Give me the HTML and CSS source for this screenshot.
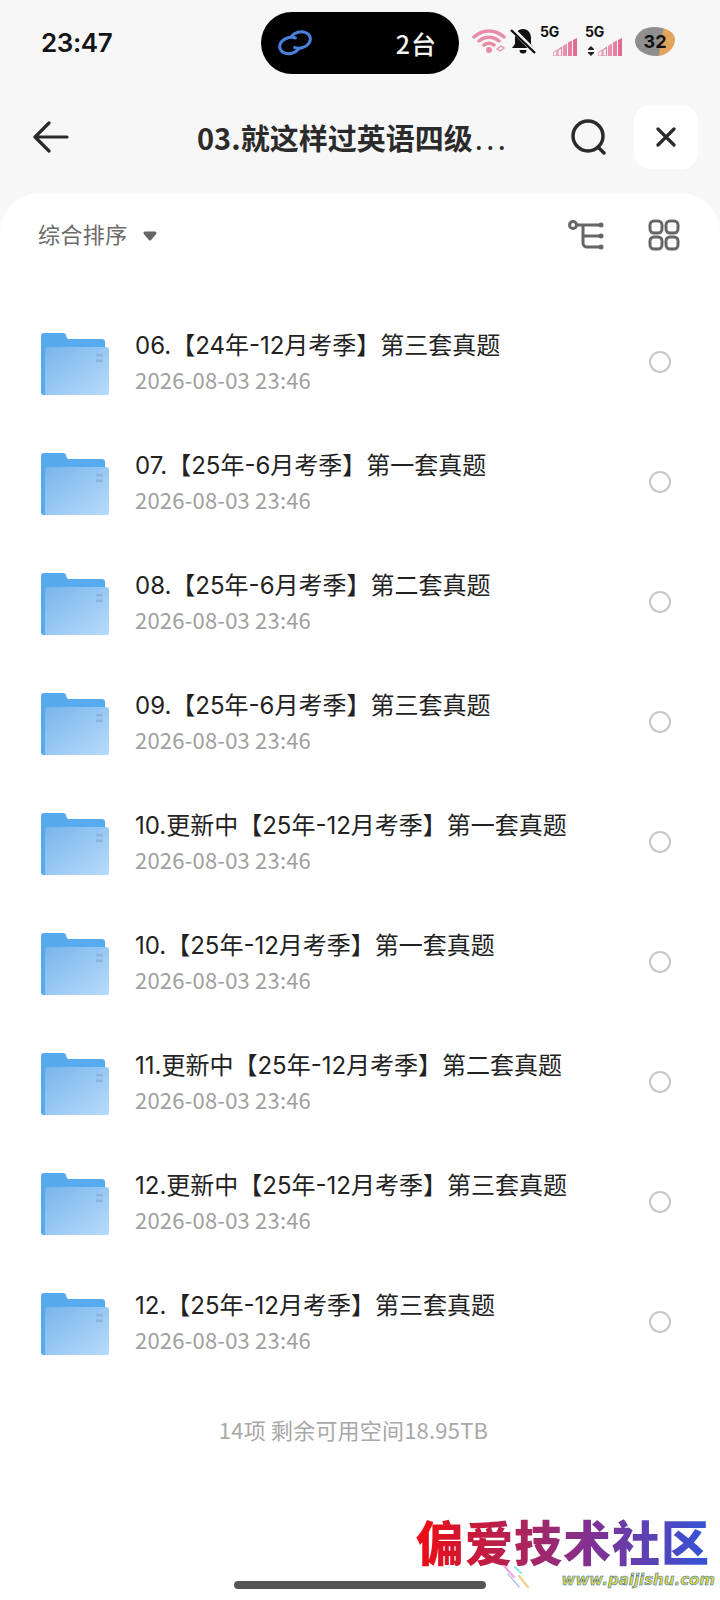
FILE: index.html
```html
<!DOCTYPE html>
<html lang="zh">
<head>
<meta charset="utf-8">
<title>03.就这样过英语四级</title>
<link rel="stylesheet" href="styles.css">
</head>
<body>
<svg class="defs" width="0" height="0" aria-hidden="true">
  <defs>
    <linearGradient id="fg" x1="0" y1="0" x2="1" y2="1">
      <stop offset="0" stop-color="#78b5ec"/>
      <stop offset="1" stop-color="#b8dbfb"/>
    </linearGradient>
    <symbol id="folder" viewBox="0 0 68 62">
      <path d="M0 59V3a3 3 0 0 1 3-3h19c2 0 3 1 3 2l1 3c.5 1 1 1 2 1h33a3 3 0 0 1 3 3v50a3 3 0 0 1-3 3H3a3 3 0 0 1-3-3z" fill="#58aaef"/>
      <path d="M4 17a3 3 0 0 1 3-3h58a3 3 0 0 1 3 3v43a2 2 0 0 1-2 2H5a1 1 0 0 1-1-1z" fill="url(#fg)"/>
      <path d="M55 21h7v2.500h-7zM55 26.500h7V29h-7z" fill="#8fb6da"/>
    </symbol>
    <symbol id="signal" viewBox="0 0 24 18">
      <path d="M0 18v-3l4-3v6z" fill="none" stroke="#e58aa6" stroke-width="1"/>
      <path d="M5 18v-6l3.500-2.500V18z" fill="none" stroke="#e58aa6" stroke-width="1.200"/>
      <path d="M10 18V8l4-2.500V18z" fill="#e88fab"/>
      <path d="M15 18V4.500l4-2V18z" fill="#e67f9f"/>
      <path d="M20 18V2l4-2v18z" fill="#df6c92"/>
    </symbol>
  </defs>
</svg>

<div class="page">
  <div class="status">
    <span class="time">23:47</span>
    <div class="island">
      <svg class="link" viewBox="0 0 36 28" width="36" height="28" fill="none" stroke="#4b7fdc" stroke-width="3" stroke-linecap="round">
        <ellipse cx="13" cy="16.500" rx="10.500" ry="8" transform="rotate(-15 13 16.500)" pathLength="100" stroke-dasharray="76 24" stroke-dashoffset="-12"/>
        <ellipse cx="23" cy="11" rx="10.500" ry="8" transform="rotate(-15 23 11)" pathLength="100" stroke-dasharray="76 24" stroke-dashoffset="-62"/>
      </svg>
      <span class="island-text">2台</span>
    </div>
    <div class="indicators">
      <svg class="wifi" viewBox="0 0 34 26" width="34" height="26" fill="none" stroke="#e88ca8" stroke-width="3.400" stroke-linecap="round">
        <path d="M2 9c9-8 21-8 30 0M7 13c6-5 14-5 20 0M12 17c3-2 7-2 10 0"/>
        <circle cx="17" cy="22" r="3" fill="#e88ca8" stroke="none"/>
        <path d="M25 21l4-3 3 2-4 3z" stroke-width="1.200"/>
      </svg>
      <svg class="bell" viewBox="0 0 26 26" width="26" height="26">
        <path d="M13 1c5 0 8 4 8 9v6l3 4H2l3-4v-6c0-5 3-9 8-9zM9.500 22h7a3.500 3.500 0 0 1-7 0z" fill="#111"/>
        <path d="M1 0l24 24" stroke="#f7f7f8" stroke-width="5"/>
        <path d="M1 2l24 23" stroke="#111" stroke-width="2.400"/>
      </svg>
      <div class="net">
        <span class="g5">5G</span>
        <svg class="sig" width="24" height="18"><use href="#signal"/></svg>
      </div>
      <div class="net net2">
        <span class="g5">5G</span>
        <span class="updown"></span>
        <svg class="sig" width="24" height="18"><use href="#signal"/></svg>
      </div>
      <div class="battery"><span class="batt-num">32</span></div>
    </div>
  </div>

  <header class="nav">
    <svg class="back" viewBox="0 0 36 32" width="36" height="32" fill="none" stroke="#2b2b2b" stroke-width="3.200" stroke-linecap="round" stroke-linejoin="round">
      <path d="M2 16h32M16 2 2 16l14 14"/>
    </svg>
    <h1 class="nav-title">03.就这样过英语四级<span class="dots">...</span></h1>
    <svg class="search" viewBox="0 0 36 36" width="36" height="36" fill="none" stroke="#2b2b2b" stroke-width="3.500" stroke-linecap="round">
      <circle cx="18" cy="17" r="15"/>
      <path d="M28 28l6 6"/>
    </svg>
    <div class="close">
      <svg viewBox="0 0 20 20" width="20" height="20" fill="none" stroke="#2b2b2b" stroke-width="3.200" stroke-linecap="round">
        <path d="M2 2l16 16M18 2 2 18"/>
      </svg>
    </div>
  </header>

  <main class="card">
    <div class="toolbar">
      <span class="sort">综合排序</span>
      <svg class="caret" viewBox="0 0 14 10" width="14" height="10">
        <path d="M2 2h10L7 8z" fill="#666" stroke="#666" stroke-width="3" stroke-linejoin="round"/>
      </svg>
      <svg class="tree" viewBox="0 0 38 32" width="38" height="32" fill="none" stroke="#666" stroke-width="3">
        <circle cx="5" cy="6" r="3.500"/>
        <path d="M9 6h25M15 6v18a4 4 0 0 0 4 4h15M15 17h19"/>
        <circle cx="33" cy="6" r="2.500" fill="#666" stroke="none"/>
        <circle cx="33" cy="17" r="2.500" fill="#666" stroke="none"/>
        <circle cx="33" cy="28" r="2.500" fill="#666" stroke="none"/>
      </svg>
      <svg class="grid-ico" viewBox="0 0 32 32" width="32" height="32" fill="none" stroke="#666" stroke-width="3">
        <rect x="2" y="2" width="12" height="12" rx="4"/>
        <rect x="18" y="2" width="12" height="12" rx="4"/>
        <rect x="2" y="18" width="12" height="12" rx="4"/>
        <rect x="18" y="18" width="12" height="12" rx="4"/>
      </svg>
    </div>

    <ul class="list">
      <li class="row">
        <svg class="folder" width="68" height="62"><use href="#folder"/></svg>
        <div class="info"><div class="name">06.【24年-12月考季】第三套真题</div><div class="date">2026-08-03 23:46</div></div>
        <span class="radio"></span>
      </li>
      <li class="row">
        <svg class="folder" width="68" height="62"><use href="#folder"/></svg>
        <div class="info"><div class="name">07.【25年-6月考季】第一套真题</div><div class="date">2026-08-03 23:46</div></div>
        <span class="radio"></span>
      </li>
      <li class="row">
        <svg class="folder" width="68" height="62"><use href="#folder"/></svg>
        <div class="info"><div class="name">08.【25年-6月考季】第二套真题</div><div class="date">2026-08-03 23:46</div></div>
        <span class="radio"></span>
      </li>
      <li class="row">
        <svg class="folder" width="68" height="62"><use href="#folder"/></svg>
        <div class="info"><div class="name">09.【25年-6月考季】第三套真题</div><div class="date">2026-08-03 23:46</div></div>
        <span class="radio"></span>
      </li>
      <li class="row">
        <svg class="folder" width="68" height="62"><use href="#folder"/></svg>
        <div class="info"><div class="name">10.更新中【25年-12月考季】第一套真题</div><div class="date">2026-08-03 23:46</div></div>
        <span class="radio"></span>
      </li>
      <li class="row">
        <svg class="folder" width="68" height="62"><use href="#folder"/></svg>
        <div class="info"><div class="name">10.【25年-12月考季】第一套真题</div><div class="date">2026-08-03 23:46</div></div>
        <span class="radio"></span>
      </li>
      <li class="row">
        <svg class="folder" width="68" height="62"><use href="#folder"/></svg>
        <div class="info"><div class="name">11.更新中【25年-12月考季】第二套真题</div><div class="date">2026-08-03 23:46</div></div>
        <span class="radio"></span>
      </li>
      <li class="row">
        <svg class="folder" width="68" height="62"><use href="#folder"/></svg>
        <div class="info"><div class="name">12.更新中【25年-12月考季】第三套真题</div><div class="date">2026-08-03 23:46</div></div>
        <span class="radio"></span>
      </li>
      <li class="row">
        <svg class="folder" width="68" height="62"><use href="#folder"/></svg>
        <div class="info"><div class="name">12.【25年-12月考季】第三套真题</div><div class="date">2026-08-03 23:46</div></div>
        <span class="radio"></span>
      </li>
    </ul>

    <p class="summary">14项 剩余可用空间18.95TB</p>
  </main>

  <div class="home-bar"></div>
  <div class="watermark">
    <div class="wm-title">偏爱技术社区</div>
    <div class="wm-url">www.paijishu.com</div>
    <svg class="wm-spark" viewBox="0 0 26 24" width="26" height="24" fill="none" stroke-width="2.200" stroke-linecap="round">
      <path d="M1 1l10 11" stroke="#f2a6e6"/>
      <path d="M12 2l6 6" stroke="#8fe8f0"/>
      <path d="M5 9l11 13" stroke="#a9c4e6" stroke-width="1.400"/>
      <path d="M16 11l9 11" stroke="#f6cf8a"/>
    </svg>
  </div>
</div>
</body>
</html>
```

FILE: styles.css
```css
* { box-sizing: border-box; }
html, body { margin: 0; padding: 0; }
body {
  width: 720px;
  height: 1600px;
  overflow: hidden;
  background: #f7f7f8;
  font-family: "Noto Sans CJK SC", "Noto Sans", sans-serif;
}
.defs { position: absolute; }
.page { position: relative; width: 720px; height: 1600px; display: flex; flex-direction: column; }

/* status bar */
.status {
  height: 74px;
  padding: 12px 0 0 41px;
  display: flex;
  align-items: center;
}
.time {
  width: 220px;
  font-family: Inter, "Noto Sans", sans-serif;
  font-size: 26px;
  font-weight: 600;
  color: #141414;
  letter-spacing: -0.4px;
  margin-top: -2px;
}
.island {
  width: 198px;
  height: 62px;
  border-radius: 31px;
  background: #000;
  display: flex;
  align-items: center;
  justify-content: space-between;
  padding: 0 22px 0 16px;
}
.island-text { color: #f4f4f4; font-size: 25px; font-weight: 500; letter-spacing: 1px; }
.indicators {
  display: flex;
  align-items: center;
  margin-top: -4px;
  margin-left: 13px;
}
.wifi { margin-right: 4px; }
.bell { margin-right: 4px; }
.net { position: relative; width: 36px; height: 30px; margin-right: 9px; }
.net2 { margin-right: 14px; }
.g5 {
  position: absolute;
  left: 0;
  top: -3px;
  font-family: Inter, sans-serif;
  font-size: 14px;
  font-weight: 700;
  color: #111;
  line-height: 17px;
  letter-spacing: -0.3px;
}
.sig { position: absolute; right: -1px; bottom: 0; }
.updown {
  position: absolute;
  left: 3px;
  bottom: 0;
  width: 6px;
  height: 10px;
  background: linear-gradient(#222 42%, transparent 42%, transparent 58%, #222 58%);
  clip-path: polygon(50% 0, 100% 30%, 100% 70%, 50% 100%, 0 70%, 0 30%);
}
.battery {
  width: 40px;
  height: 29px;
  border-radius: 48% 52% 46% 54% / 50% 42% 58% 50%;
  background: linear-gradient(100deg, #8f8f8f 0 62%, #e2a45c 66% 100%);
  display: flex;
  align-items: center;
  justify-content: center;
}
.batt-num { font-family: Inter, sans-serif; font-size: 18px; font-weight: 700; color: #111; }

/* nav */
.nav {
  height: 119px;
  display: flex;
  align-items: center;
  padding: 6px 22px 0 33px;
}
.back { flex: none; margin-right: 128px; }
.nav-title {
  flex: 1;
  margin: 0;
  font-size: 29px;
  font-weight: 700;
  color: #2b2b2b;
  white-space: nowrap;
}
.dots { font-weight: 400; letter-spacing: 3.500px; margin-left: 2px; }
.search { flex: none; margin-right: 28px; }
.close {
  flex: none;
  width: 64px;
  height: 64px;
  border-radius: 16px;
  background: #fff;
  display: flex;
  align-items: center;
  justify-content: center;
}

/* card */
.card {
  flex: 1;
  background: #fff;
  border-radius: 40px 40px 0 0;
}
.toolbar {
  height: 84px;
  display: flex;
  align-items: center;
  padding: 0 40px 0 38px;
}
.sort { font-size: 22px; color: #6a6a6a; letter-spacing: 0.4px; margin-top: -4px; }
.caret { margin-left: 15px; margin-top: 1px; }
.tree { margin-left: auto; margin-right: 42px; }
.list { list-style: none; margin: 25px 0 0; padding: 0; }
.row {
  height: 120px;
  display: flex;
  align-items: center;
  padding: 0 49px 0 41px;
}
.folder { flex: none; margin-right: 26px; margin-top: 4px; }
.info { flex: 1; min-width: 0; }
.name {
  font-family: Inter, "Noto Sans CJK SC", sans-serif;
  font-size: 24px;
  line-height: 32px;
  color: #222;
  white-space: nowrap;
}
.date { font-size: 22px; line-height: 30px; color: #a0a0a0; margin-top: 2px; white-space: nowrap; letter-spacing: 0.2px; }
.radio {
  flex: none;
  width: 22px;
  height: 22px;
  border: 2px solid #c8c8c8;
  border-radius: 50%;
}
.summary {
  margin: 32px 0 0;
  padding-right: 13px;
  text-align: center;
  font-size: 22px;
  line-height: 30px;
  color: #a8a8a8;
  letter-spacing: 0.2px;
}

/* overlays */
.home-bar {
  position: absolute;
  left: 234px;
  bottom: 11px;
  width: 252px;
  height: 8px;
  border-radius: 4px;
  background: #555;
}
.watermark {
  position: absolute;
  left: 416px;
  top: 1519px;
  width: 300px;
}
.wm-title {
  font-family: "Liberation Sans", "Noto Sans CJK SC", sans-serif;
  font-size: 48px;
  font-weight: 900;
  line-height: 52px;
  letter-spacing: 1px;
  white-space: nowrap;
  background: linear-gradient(90deg, #ee0d12, #b62150 30%, #7e3296 60%, #2e56dc);
  -webkit-background-clip: text;
  background-clip: text;
  color: transparent;
}
.wm-url {
  text-align: right;
  margin-top: 1px;
  margin-right: 1px;
  font-family: "DejaVu Sans", sans-serif;
  font-size: 15px;
  font-weight: 700;
  font-style: italic;
  line-height: 17px;
  color: #e0d83c;
  -webkit-text-stroke: 0.5px #2467c0;
  white-space: nowrap;
}
.wm-spark { position: absolute; left: 87px; top: 46px; }
```
